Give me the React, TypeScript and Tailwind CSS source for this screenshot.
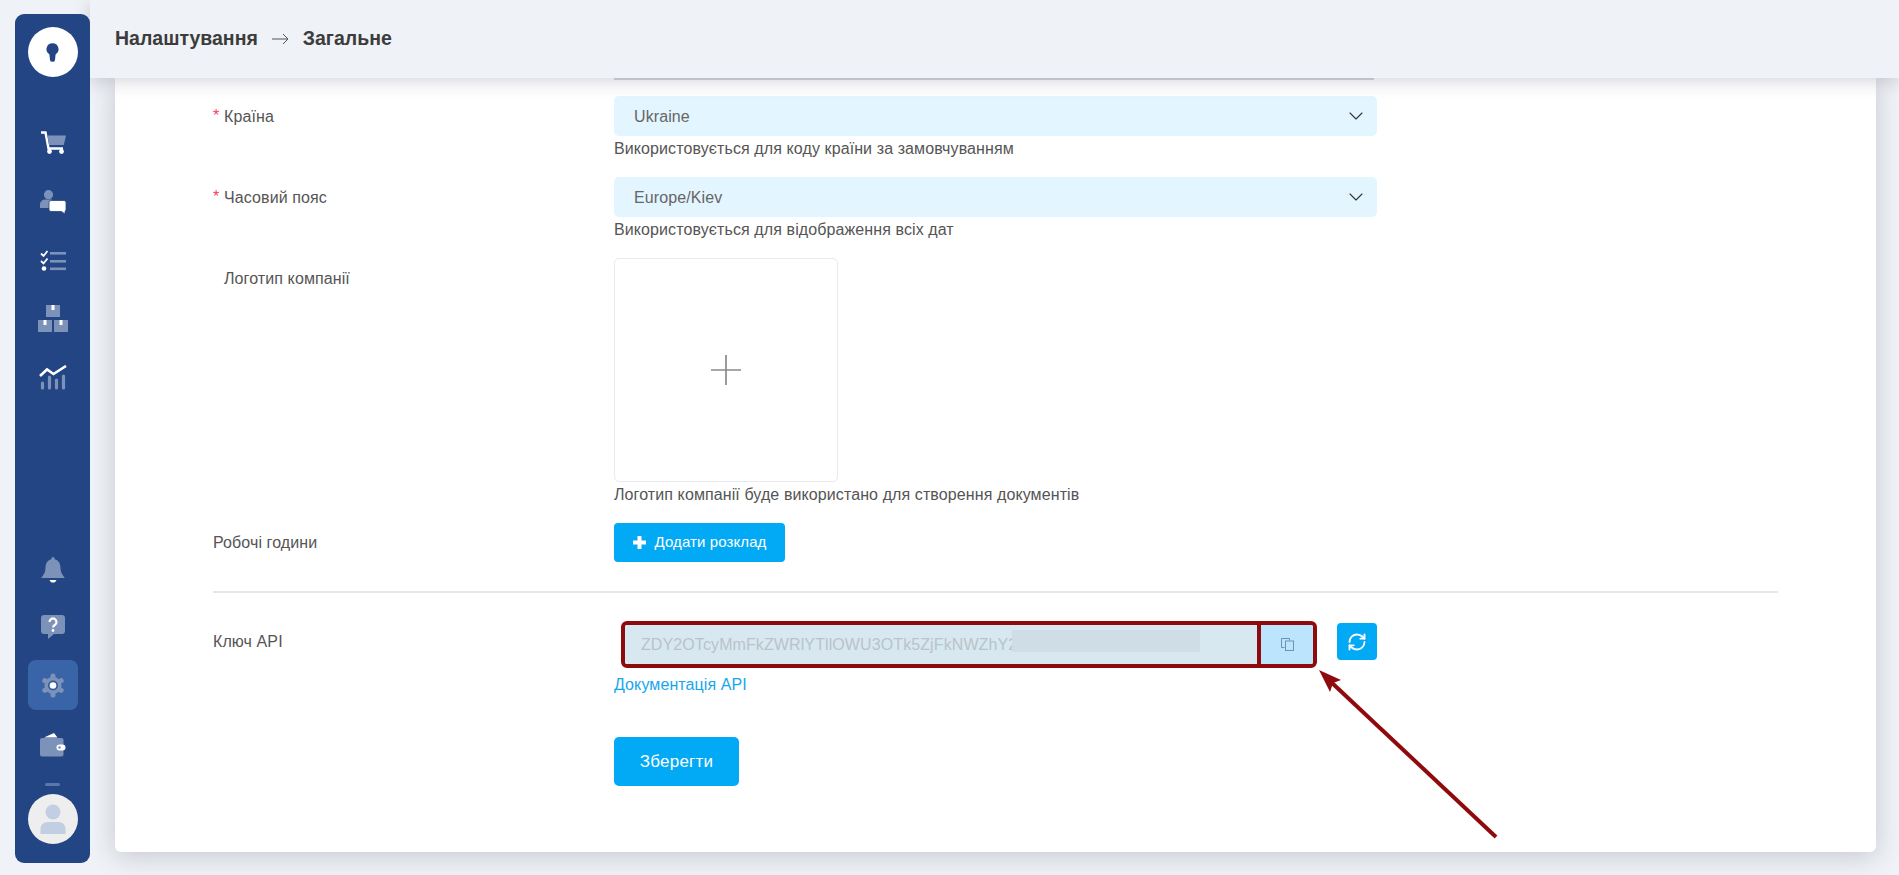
import React from "react";
import { ChevronDown, RefreshCw } from "lucide-react";

const Muted = "#7d92b9";

function IconCart() {
  return (
    <svg width="26" height="24" viewBox="0 0 26 24">
      <path d="M1 1.500h4.500L8.500 17.500H23" fill="none" stroke="#fff" strokeWidth="2.400" />
      <path d="M7.500 4.500H26l-2.200 9.500H9z" fill={Muted} />
      <circle cx="9.500" cy="20.500" r="2.400" fill="#fff" />
      <circle cx="21.500" cy="20.500" r="2.400" fill="#fff" />
    </svg>
  );
}
function IconChat() {
  return (
    <svg width="26" height="24" viewBox="0 0 26 24">
      <circle cx="8.500" cy="4.700" r="4.600" fill={Muted} />
      <path d="M0 18v-3.500a5 5 0 0 1 5-5h7V18z" fill={Muted} />
      <path d="M11 10.500h13a2 2 0 0 1 2 2v7a2 2 0 0 1-1 1.700V24l-3.500-2.500H11a2 2 0 0 1-2-2v-7a2 2 0 0 1 2-2z" fill="#fff" stroke="#244583" strokeWidth="0.800" />
    </svg>
  );
}
function IconList() {
  return (
    <svg width="26" height="22" viewBox="0 0 26 22" className="mt-[1px]">
      <path d="M1 3.500l2.500 2.500L7.500 1M1 11l2.500 2.500L7.500 8.500" fill="none" stroke="#fff" strokeWidth="1.800" />
      <circle cx="4" cy="18.500" r="2.300" fill="#fff" />
      <rect x="10" y="2" width="16" height="2.600" fill={Muted} />
      <rect x="10" y="10" width="16" height="2.600" fill={Muted} />
      <rect x="10" y="17.500" width="16" height="2.600" fill={Muted} />
    </svg>
  );
}
function IconBoxes() {
  return (
    <svg width="30" height="27" viewBox="0 0 30 27">
      <rect x="8" y="0" width="14" height="12" fill={Muted} />
      <rect x="0" y="15" width="14" height="12" fill={Muted} />
      <rect x="16" y="15" width="14" height="12" fill={Muted} />
      <rect x="13.500" y="0" width="3" height="5" fill="#fff" />
      <rect x="5.500" y="15" width="3" height="5" fill="#fff" />
      <rect x="21.500" y="15" width="3" height="5" fill="#fff" />
    </svg>
  );
}
function IconChart() {
  return (
    <svg width="28" height="25" viewBox="0 0 28 25">
      <path d="M1 11l7-6.500 6.500 4.500L27 1" fill="none" stroke="#fff" strokeWidth="2.600" />
      <g stroke={Muted} strokeWidth="3.200" strokeLinecap="round">
        <path d="M3.500 18v5M10.500 12v11M17.500 15v8M24.500 11v12" />
      </g>
    </svg>
  );
}
function IconBell() {
  return (
    <svg width="24" height="26" viewBox="0 0 24 26">
      <path d="M12 0a1.600 1.600 0 0 1 1.600 1.600v.6C18 3.200 19.500 7 19.500 11c0 4.500 2 7 4 9.500V21H.500v-.5c2-2.500 4-5 4-9.500 0-4 1.500-7.800 5.900-8.800v-.6A1.600 1.600 0 0 1 12 0z" fill={Muted} />
      <path d="M8.500 23h7c-.500 1.600-2 2.600-3.500 2.600S9 24.600 8.500 23z" fill="#fff" />
    </svg>
  );
}
function IconQuestion() {
  return (
    <svg width="24" height="24" viewBox="0 0 24 24">
      <path d="M3 0h18a3 3 0 0 1 3 3v13a3 3 0 0 1-3 3H13l-6 5v-5H3a3 3 0 0 1-3-3V3a3 3 0 0 1 3-3z" fill={Muted} />
      <path d="M8.500 7a3.500 3.500 0 1 1 5.300 3c-1.300.8-1.800 1.200-1.800 2.500" fill="none" stroke="#fff" strokeWidth="2.200" />
      <circle cx="12" cy="15.500" r="1.400" fill="#fff" />
    </svg>
  );
}
function IconGear() {
  return (
    <svg width="24" height="25" viewBox="0 0 24 24">
      <g stroke={Muted} strokeWidth="5" strokeLinecap="round">
        <path d="M12 2.500v19M3.800 7.200l16.400 9.600M3.800 16.800l16.400-9.600" />
      </g>
      <circle cx="12" cy="12" r="8.500" fill={Muted} />
      <circle cx="12" cy="12" r="5" fill="#2f5aa0" />
      <circle cx="12" cy="12" r="3.300" fill="#fff" />
    </svg>
  );
}
function IconWallet() {
  return (
    <svg width="26" height="24" viewBox="0 0 26 24">
      <path d="M4 4.500L14 0l3.500 4.500z" fill="#fff" />
      <rect x="0" y="5" width="23.500" height="18.500" rx="2" fill={Muted} />
      <rect x="16.500" y="11.500" width="9" height="6" rx="3" fill="#fff" />
      <circle cx="19.500" cy="14.500" r="1.300" fill={Muted} />
    </svg>
  );
}

function NavItem({ children, active, className }: { children: React.ReactNode; active?: boolean; className?: string }) {
  return (
    <div className={`flex h-[50px] w-[50px] items-center justify-center rounded-lg ${active ? "bg-[#3a64a8]" : ""} ${className ?? ""}`}>
      {children}
    </div>
  );
}

function Sidebar() {
  return (
    <aside className="z-20 my-[14px] ml-[15px] flex h-[849px] w-[75px] shrink-0 flex-col items-center rounded-[9px] bg-[#244583] pt-[13px]">
      <div className="flex h-[50px] w-[50px] items-center justify-center rounded-full bg-white">
        <svg width="13" height="19" viewBox="0 0 14 20">
          <path d="M7 0a6.500 6.500 0 0 1 3.300 12.100L9.700 18a2.700 2 0 0 1-5.400 0l-.6-5.900A6.500 6.500 0 0 1 7 0z" fill="#244583" />
        </svg>
      </div>
      <div className="mt-[41px] flex flex-col gap-[8.5px]">
        <NavItem><IconCart /></NavItem>
        <NavItem><IconChat /></NavItem>
        <NavItem><IconList /></NavItem>
        <NavItem><IconBoxes /></NavItem>
        <NavItem><IconChart /></NavItem>
      </div>
      <div className="mt-auto flex flex-col items-center">
        <NavItem><IconBell /></NavItem>
        <NavItem className="mt-[7px]"><IconQuestion /></NavItem>
        <NavItem active className="mt-[8px]"><IconGear /></NavItem>
        <NavItem className="mt-[10px]"><IconWallet /></NavItem>
      </div>
      <div className="mt-[13px] h-[3px] w-[15px] rounded-sm bg-[#5a78ad]" />
      <div className="mt-[8px] mb-[19px] flex h-[50px] w-[50px] items-center justify-center rounded-full bg-[#eeeeee]">
        <svg width="26" height="30" viewBox="0 0 26 30">
          <circle cx="13" cy="8" r="7.500" fill="#c2cee2" />
          <path d="M0.500 30v-5c0-4 3-7 7-7h11c4 0 7 3 7 7v5z" fill="#c2cee2" />
        </svg>
      </div>
    </aside>
  );
}

function Label({ text, required, indent = true }: { text: string; required?: boolean; indent?: boolean }) {
  return (
    <div className="flex h-[40px] w-[401px] shrink-0 items-center pt-[2px]">
      {required ? <span className="w-[11px] pb-[3px] text-[#f5425f]">*</span> : indent ? <span className="w-[11px]" /> : null}
      <span>{text}</span>
    </div>
  );
}

function SelectBox({ value, hint }: { value: string; hint: string }) {
  return (
    <div className="w-[763px]">
      <div className="flex h-[40px] items-center justify-between rounded-[5px] bg-[#e3f5fe] pr-[9px] pl-[20px]">
        <span className="pt-[2px] text-[#666666]">{value}</span>
        <ChevronDown size={24} strokeWidth={1.100} color="#333333" />
      </div>
      <div className="mt-[3px] h-[20px] leading-[20px]">{hint}</div>
    </div>
  );
}

export default function App() {
  return (
    <div className="relative flex h-[875px] w-[1899px] overflow-hidden bg-[#eff2f6] font-['Liberation_Sans',Arial,sans-serif] text-[16px] tracking-[0.1px] text-[#555555]">
      <Sidebar />
      <div className="flex min-w-0 flex-1 flex-col">
        <header className="z-10 flex h-[78px] shrink-0 items-center bg-[#eff2f6] pl-[25px] text-[19.500px] font-bold tracking-normal text-[#3c3c3c] shadow-[0_4px_16px_rgba(60,50,80,0.2)]">
          <span>Налаштування</span>
          <svg className="mx-[14px]" width="17" height="12" viewBox="0 0 17 12">
            <path d="M0 6h16M11 1l5 5-5 5" fill="none" stroke="#555555" strokeWidth="1" />
          </svg>
          <span>Загальне</span>
        </header>
        <div className="min-h-0 flex-1 pr-[23px] pb-[23px] pl-[25px]">
          <main className="h-full rounded-b-[6px] bg-white px-[98px] shadow-[0_4px_26px_rgba(50,50,70,0.22)]">
            <div className="mb-[16px] ml-[401px] h-[2px] w-[760px] bg-[#d3d6de]" />
            <section className="mb-[18px] flex">
              <Label text="Країна" required />
              <SelectBox value="Ukraine" hint="Використовується для коду країни за замовчуванням" />
            </section>
            <section className="mb-[18px] flex">
              <Label text="Часовий пояс" required />
              <SelectBox value="Europe/Kiev" hint="Використовується для відображення всіх дат" />
            </section>
            <section className="mb-[18px] flex">
              <Label text="Логотип компанії" />
              <div>
                <div className="flex h-[224px] w-[224px] items-center justify-center rounded-[5px] border border-[#e9e9f0] bg-white">
                  <svg width="30" height="30" viewBox="0 0 30 30">
                    <path d="M15 0v30M0 15h30" stroke="#8a8a8a" strokeWidth="1.700" />
                  </svg>
                </div>
                <div className="mt-[3px] h-[20px] leading-[20px]">Логотип компанії буде використано для створення документів</div>
              </div>
            </section>
            <section className="flex items-center">
              <div className="w-[401px]">Робочі години</div>
              <button className="flex h-[39px] w-[171px] items-center justify-center gap-[9px] rounded-[4px] bg-[#02a9f4] text-[15px] text-white">
                <svg width="13" height="13" viewBox="0 0 13 13">
                  <path d="M6.500 0v13M0 6.500h13" stroke="#fff" strokeWidth="4" />
                </svg>
                Додати розклад
              </button>
            </section>
            <hr className="mt-[29px] mb-[28px] border-t-2 border-[#e6e6ee]" />
            <section className="flex">
              <Label text="Ключ API" indent={false} />
              <div className="w-[763px]">
                <div className="flex items-start">
                  <div className="ml-[7px] flex h-[47px] w-[696px] overflow-hidden rounded-[6px] border-4 border-[#8f0a0c]">
                    <div className="relative flex flex-1 items-center overflow-hidden bg-[#d8e8f0] pl-[16px] text-[#b9c3cb]">
                      ZDY2OTcyMmFkZWRlYTllOWU3OTk5ZjFkNWZhY2
                      <div className="absolute top-[5px] left-[387px] h-[22px] w-[188px] bg-[#cfdde6]" />
                    </div>
                    <div className="flex w-[56px] items-center justify-center border-l-4 border-[#8f0a0c] bg-[#bde4fd]">
                      <svg width="13" height="13" viewBox="0 0 13 13" fill="none" stroke="#6a93b5" strokeWidth="1">
                        <path d="M8.500 2.500V.500H.500v9h3" />
                        <rect x="4.500" y="3" width="8" height="9.500" />
                      </svg>
                    </div>
                  </div>
                  <button className="mt-[2px] ml-[20px] flex h-[37px] w-[40px] items-center justify-center rounded-[4px] bg-[#02a9f4] text-white">
                    <RefreshCw size={20} strokeWidth={2.200} />
                  </button>
                </div>
                <a className="mt-[7px] block h-[20px] leading-[20px] text-[#18a6ee]">Документація API</a>
                <button className="mt-[42px] h-[49px] w-[125px] rounded-[5px] bg-[#02a9f4] text-[17px] tracking-[0.2px] text-white">Зберегти</button>
              </div>
            </section>
          </main>
        </div>
      </div>
      <svg className="pointer-events-none absolute top-0 left-0 z-30" width="1899" height="875" viewBox="0 0 1899 875">
        <path d="M1496 837L1331 682" stroke="#8f0a0c" strokeWidth="4" fill="none" />
        <path d="M1319 670L1341 680 1333 683 1330 692z" fill="#8f0a0c" />
      </svg>
    </div>
  );
}
